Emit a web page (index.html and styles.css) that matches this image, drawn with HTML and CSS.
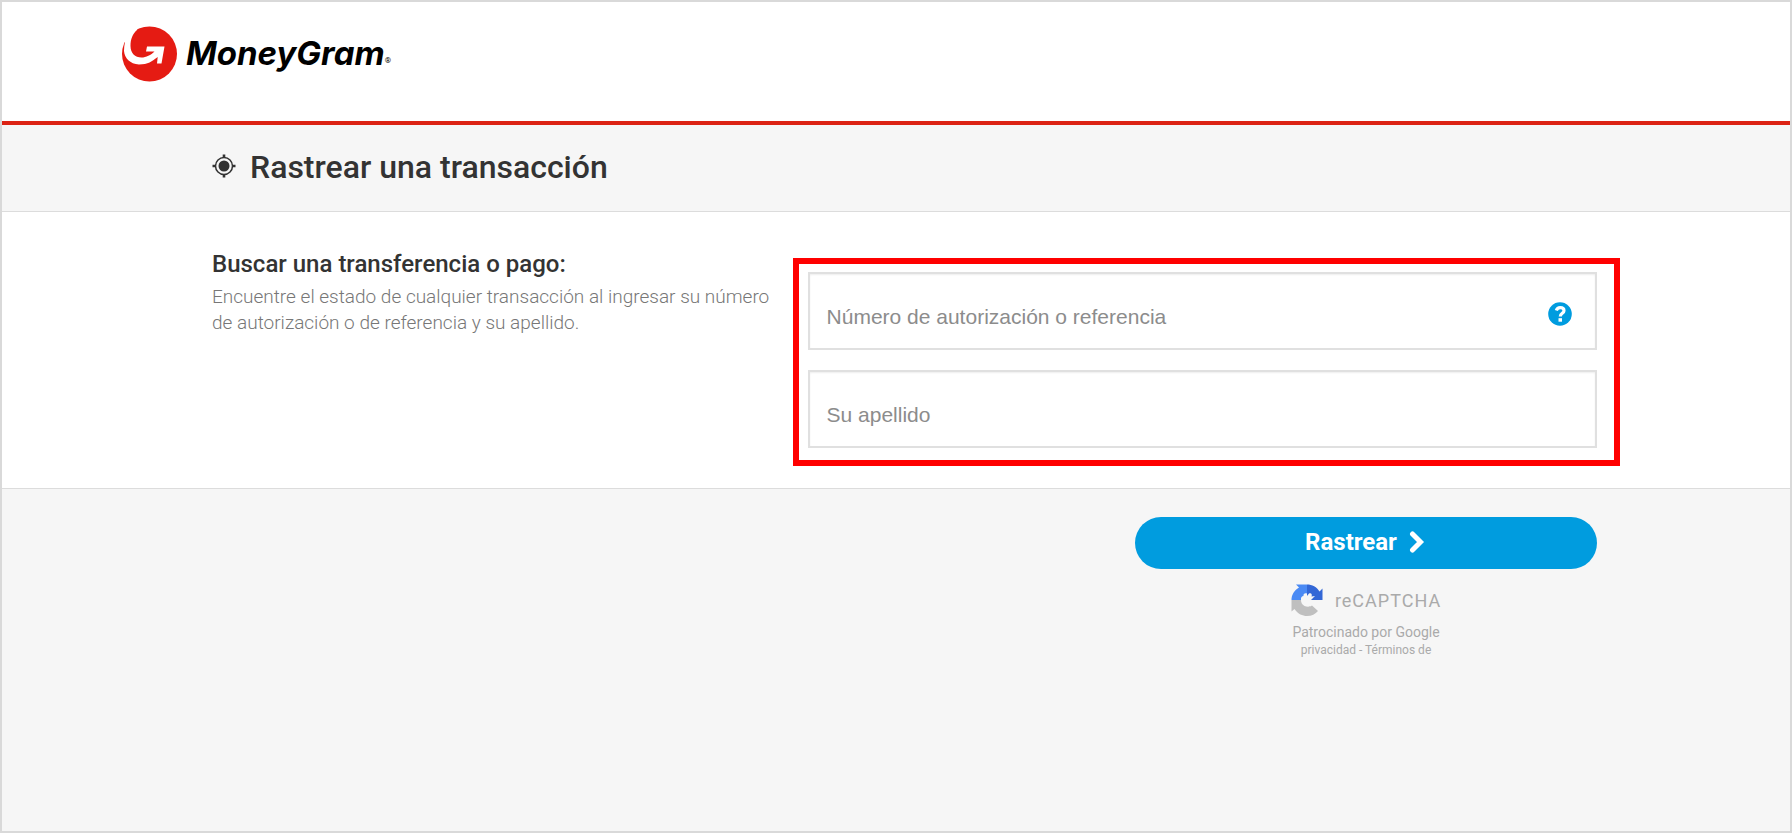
FILE: index.html
```html
<!DOCTYPE html>
<html lang="es">
<head>
<meta charset="utf-8">
<meta name="viewport" content="width=device-width, initial-scale=1">
<title>Rastrear una transacción</title>
<link rel="stylesheet" href="styles.css">
</head>
<body>
<div class="page">
  <header class="site-header">
    <a class="brand" href="#">
      <svg class="brand-mark" viewBox="0 0 56 56" aria-hidden="true">
        <circle cx="27.500" cy="28" r="27.500" fill="#e51b13"/>
        <path d="M0 0H15V4C10.500 8 8.500 13 8.500 20C8.500 27 13 31.500 19.500 31.500C24 31.500 29 29 32.500 25.500H24L25 20.500H42.500L39.500 37.500H35L35.700 31C30 35.500 26 38.500 17 38.500C8 38 2.500 32 2 25C2 22 2.300 19 3 16H0Z" fill="#fff"/>
      </svg>
      <span class="brand-name">MoneyGram</span><span class="brand-reg">®</span>
    </a>
  </header>

  <div class="title-bar">
    <svg class="target" viewBox="0 0 24 24" aria-hidden="true">
      <circle cx="12" cy="12" r="8.500" fill="none" stroke="#333" stroke-width="1.500"/>
      <circle cx="12" cy="12" r="5.500" fill="#333"/>
      <path d="M12 .5V4M12 20V23.500M.5 12H4M20 12H23.500" stroke="#333" stroke-width="2.600"/>
    </svg>
    <h1>Rastrear una transacción</h1>
  </div>

  <form class="tracker">
    <div class="search">
      <div class="intro">
        <h2>Buscar una transferencia o pago:</h2>
        <p>Encuentre el estado de cualquier transacción al ingresar su número de autorización o de referencia y su apellido.</p>
      </div>
      <div class="fields">
        <div class="field">
          <input type="text" aria-label="Número de autorización o referencia" placeholder="Número de autorización o referencia">
          <button class="help" type="button" aria-label="Ayuda">
            <svg viewBox="0 0 24 24" aria-hidden="true">
              <circle cx="12" cy="12" r="11.800" fill="#009cdf"/>
              <path d="M8.300 8.600C9 6.500 10.300 5.700 12.200 5.700C14.400 5.700 16 6.800 16 8.700C16 11.500 12.300 11.200 12.300 14.500" fill="none" stroke="#fff" stroke-width="3.200"/>
              <rect x="10.500" y="16.200" width="3.500" height="3.500" fill="#fff"/>
            </svg>
          </button>
        </div>
        <div class="field">
          <input type="text" aria-label="Su apellido" placeholder="Su apellido">
        </div>
      </div>
    </div>

    <div class="actions">
      <div class="action-column">
        <button class="submit" type="submit">Rastrear
          <svg viewBox="0 0 16 22" aria-hidden="true"><path d="M3.500 3L11.500 11L3.500 19" fill="none" stroke="#fff" stroke-width="5" stroke-linecap="round" stroke-linejoin="miter"/></svg>
        </button>
        <div class="captcha">
          <div class="captcha-brand">
            <svg viewBox="0 0 32 32" aria-hidden="true">
              <path d="M16 .5H5L8 3.500C3 6.500 .5 11 .5 16H10C9.500 13.500 11 12 12.500 12C12 10 14 8.500 16 9.500Z" fill="#4a8af4"/>
              <path d="M16 .5V12L18 9.500C20 8.500 21.500 10 20.500 12.500L24 12L20 16H31.500V4.500L28.500 7.500C26 3 21 .5 16 .5Z" fill="#3367d6"/>
              <path d="M.5 16V27.500L3.500 25C7 30 11.500 32 16 32C20.500 32 24.500 30 27 27L21 21.500C19 23 16 23 13.500 22C11 20.500 10 18.500 10 16Z" fill="#bfbfbf"/>
            </svg>
            <span>reCAPTCHA</span>
          </div>
          <div class="captcha-by">Patrocinado por Google</div>
          <div class="captcha-links"><a href="#">privacidad</a> - <a href="#">Términos de</a></div>
        </div>
      </div>
    </div>
  </form>
</div>
</body>
</html>
```
FILE: styles.css
```css
* { box-sizing: border-box; }

body {
  margin: 0;
  font-family: Roboto, "Liberation Sans", sans-serif;
  color: #333;
}

h1, h2, p { margin: 0; }
svg { display: block; flex: none; }

.page {
  min-height: 100vh;
  display: flex;
  flex-direction: column;
  border: 2px solid #d9d9d9;
  background: #f6f6f6;
}

.site-header {
  padding: 24px 120px 39px;
  background: #fff;
  border-bottom: 4px solid #dc2314;
}

.brand {
  display: inline-flex;
  align-items: center;
  color: #000;
  text-decoration: none;
  vertical-align: top;
}

.brand-mark { width: 56px; height: 56px; }

.brand-name {
  margin-left: 8px;
  padding-bottom: 2px;
  font: italic 700 33px/40px Inter, sans-serif;
  font-feature-settings: "cv11";
}

.brand-reg {
  padding-top: 14px;
  font-size: 8px;
  line-height: 10px;
}

.title-bar {
  display: flex;
  align-items: center;
  gap: 14px;
  padding: 22px 193px 24px 210px;
  border-bottom: 1px solid #dcdcdc;
}

.target { width: 24px; height: 24px; margin-bottom: 2px; }

h1 {
  font-size: 32px;
  line-height: 40px;
  font-weight: 500;
}

.tracker {
  flex: 1;
  display: flex;
  flex-direction: column;
}

.search {
  display: grid;
  grid-template-columns: 43fr 57fr;
  padding: 38px 193px 40px 210px;
  background: #fff;
  border-bottom: 1px solid #dcdcdc;
}

.intro { padding-right: 30px; }

h2 {
  font-size: 24px;
  line-height: 28px;
  font-weight: 500;
}

.intro p {
  margin-top: 6px;
  font-size: 19px;
  line-height: 26px;
  font-weight: 300;
  color: #777;
}

.fields {
  position: relative;
  display: grid;
  gap: 20px;
  padding-top: 22px;
}

.fields::after {
  content: "";
  position: absolute;
  inset: 8px -23px -18px -15px;
  border: 6px solid #f00;
  pointer-events: none;
}

.field { position: relative; }

.field input {
  display: block;
  width: 100%;
  height: 78px;
  padding: 16px 60px 4px 17px;
  border: 2px solid #e0e0e0;
  border-radius: 0;
  background: #fff;
  box-shadow: inset 0 1px 2px #eee;
  font: 21px "Liberation Sans", Arial, sans-serif;
  color: #333;
}

.field input::placeholder { color: #8c8c8c; opacity: 1; }

.help {
  position: absolute;
  top: 30px;
  right: 25px;
  width: 24px;
  height: 24px;
  padding: 0;
  border: 0;
  background: none;
}

.actions {
  display: flex;
  justify-content: flex-end;
  padding: 28px 193px 40px 210px;
}

.action-column { width: 462px; }

.submit {
  display: flex;
  align-items: center;
  justify-content: center;
  gap: 12px;
  width: 100%;
  height: 52px;
  padding: 0 2px 2px 0;
  border: 0;
  border-radius: 26px;
  background: #009cdf;
  color: #fff;
  font: 700 24px Roboto, sans-serif;
}

.submit svg { width: 16px; height: 22px; }

.captcha {
  padding-top: 15px;
  text-align: center;
  color: #aaa;
}

.captcha-brand {
  display: flex;
  align-items: center;
  justify-content: center;
  gap: 12px;
  font-size: 18px;
  letter-spacing: 1px;
}

.captcha-brand svg { width: 32px; height: 32px; }

.captcha-by {
  margin-top: 6px;
  font-size: 14px;
  line-height: 20px;
}

.captcha-links {
  font-size: 12px;
  line-height: 16px;
}

.captcha-links a { color: inherit; text-decoration: none; }
```
